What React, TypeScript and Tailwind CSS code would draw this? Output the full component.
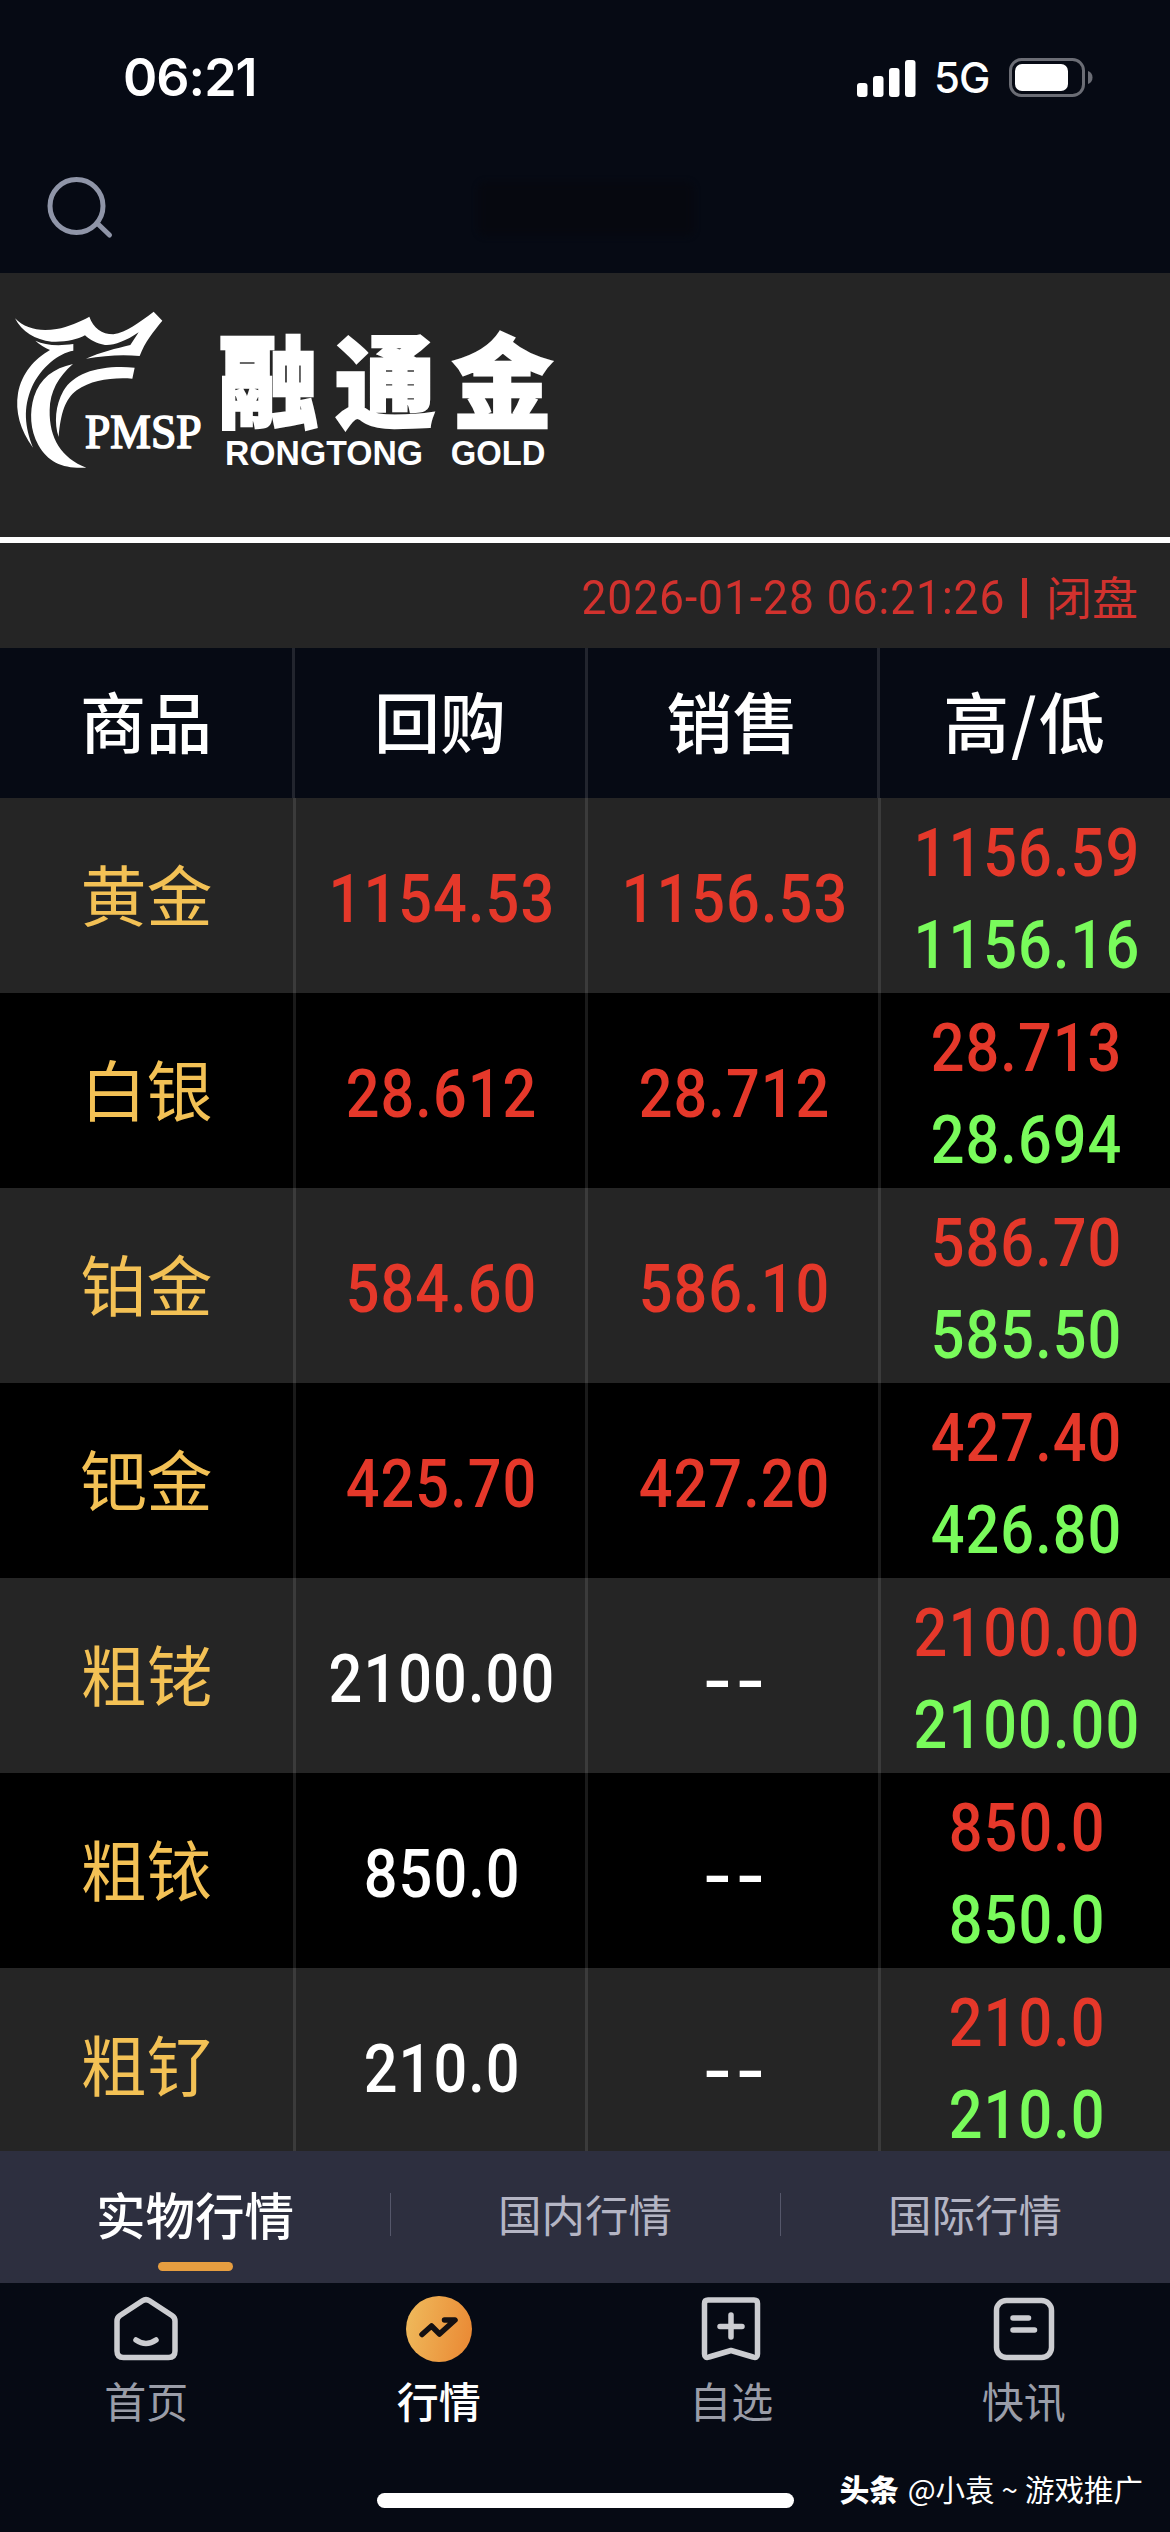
import { useState } from 'react';
import clsx from 'clsx';

type Quote = { name: string; buy: string; sell: string; high: string; low: string; up?: boolean };

const QUOTES: Quote[] = [
  { name: '黄金', buy: '1154.53', sell: '1156.53', high: '1156.59', low: '1156.16', up: true },
  { name: '白银', buy: '28.612', sell: '28.712', high: '28.713', low: '28.694', up: true },
  { name: '铂金', buy: '584.60', sell: '586.10', high: '586.70', low: '585.50', up: true },
  { name: '钯金', buy: '425.70', sell: '427.20', high: '427.40', low: '426.80', up: true },
  { name: '粗铑', buy: '2100.00', sell: '--', high: '2100.00', low: '2100.00' },
  { name: '粗铱', buy: '850.0', sell: '--', high: '850.0', low: '850.0' },
  { name: '粗钌', buy: '210.0', sell: '--', high: '210.0', low: '210.0' },
];

const COLUMNS = ['商品', '回购', '销售', '高/低'];
const TABS = ['实物行情', '国内行情', '国际行情'];

function StatusBar() {
  return (
    <div className="flex h-[156px] items-center justify-between pl-[123px] pr-[77px] font-['Inter',sans-serif] text-white">
      <span className="text-[52px] font-semibold leading-none tracking-[-1px]">06:21</span>
      <div className="flex items-center">
        <svg width="60" height="40" viewBox="0 0 60 40" fill="#fff">
          <rect x="1" y="25" width="10.5" height="14" rx="3" />
          <rect x="17" y="18" width="10.5" height="21" rx="3" />
          <rect x="33" y="10" width="10.5" height="29" rx="3" />
          <rect x="49" y="2" width="10.5" height="37" rx="3" />
        </svg>
        <span className="ml-[18px] w-[56px] text-[42px] font-medium leading-none tracking-[-1px]">5G</span>
        <svg className="ml-[19px]" width="84" height="40" viewBox="0 0 84 40">
          <rect x="1.5" y="1.5" width="73" height="36" rx="11" fill="none" stroke="#6b6d75" strokeWidth="3" />
          <rect x="6" y="6" width="53" height="27" rx="7" fill="#fff" />
          <path d="M79 13c3 1 4.500 3.500 4.500 6.500s-1.500 5.500-4.500 6.500z" fill="#6b6d75" />
        </svg>
      </div>
    </div>
  );
}

function SearchBar() {
  return (
    <div className="flex h-[117px] items-center pl-[46px]">
      <svg className="mb-3" width="70" height="66" viewBox="0 0 70 66" fill="none" stroke="#8f95a8" strokeWidth="5" strokeLinecap="round">
        <circle cx="30.500" cy="30" r="26.500" />
        <path d="M52 48l11.500 11" />
      </svg>
      <div className="mb-3 ml-[362px] h-[54px] w-[216px] rounded-lg bg-[#07080f] opacity-80 blur-[3px]" />
    </div>
  );
}

function Logo() {
  return (
    <div className="h-[264px] bg-[#252525] pl-[10px] pt-8">
      <svg className="overflow-visible" width="560" height="170" viewBox="0 0 1680 510" fill="#fff">
        <path d="M15 40C45 72 90 80 140 72C175 66 210 50 238 35C250 68 275 88 310 88C350 80 385 55 431 20L457 47C430 80 405 110 389 153C340 148 285 151 228 161C270 142 320 130 361 120L386 82C345 110 310 122 285 120C260 116 240 105 225 91C200 104 165 112 125 110C75 105 35 80 15 40Z" />
        <path d="M76 107C105 120 140 124 190 117V137C145 145 95 185 66 245C38 310 45 365 69 428C30 375 15 320 24 265C35 205 75 160 120 135C105 128 88 118 76 107Z" />
        <path d="M189 177C145 215 120 260 119 315C117 400 155 460 229 488C165 492 115 475 85 420C60 375 58 320 72 275C90 220 130 190 189 177Z" />
        <path d="M374 188L367 221C305 217 245 225 200 256C165 283 152 325 146 396C132 355 136 300 160 258C195 200 275 180 374 188Z" />
        <text x="225" y="430" fontSize="144" fontFamily="'Liberation Serif', serif" stroke="#fff" strokeWidth="5" textLength="350" lengthAdjust="spacingAndGlyphs">PMSP</text>
        <g fontSize="302" fontWeight="900" fontFamily="'Noto Sans CJK SC', sans-serif" stroke="#fff" strokeWidth="7">
          <text x="625" y="344">融</text>
          <text x="975" y="344">通</text>
          <text x="1326" y="344">金</text>
        </g>
        <g fontSize="103" fontWeight="700" fontFamily="'Liberation Sans', sans-serif">
          <text x="645" y="479" textLength="594" lengthAdjust="spacingAndGlyphs">RONGTONG</text>
          <text x="1322" y="479" textLength="284" lengthAdjust="spacingAndGlyphs">GOLD</text>
        </g>
      </svg>
    </div>
  );
}

function Num({ value, className }: { value: string; className: string }) {
  if (value === '--') {
    return <span className={clsx('ml-[7px] inline-block scale-x-[1.25] pt-1 font-medium tracking-[4px]', className)}>--</span>;
  }
  return <span className={clsx('ml-[3px] inline-block scale-x-[0.9] font-medium tracking-[1.2px]', className)}>{value}</span>;
}

function QuoteRow({ quote, odd }: { quote: Quote; odd: boolean }) {
  const color = quote.up ? 'text-[#e5382a]' : 'text-white';
  const cell = 'flex items-center justify-center';
  return (
    <div
      className={clsx(
        'grid h-[195px] shrink-0 grid-cols-[296px_292px_293px_289px] font-[Roboto,"Noto_Sans_CJK_SC",sans-serif] text-[66px] leading-none',
        odd ? 'bg-black' : 'bg-[#252525]',
      )}
    >
      <div className={clsx(cell, 'border-r-[3px] border-white/10 pt-1.5 text-[#f3c155]')}>{quote.name}</div>
      <div className={clsx(cell, 'border-r-[3px] border-white/10 pt-2')}><Num value={quote.buy} className={color} /></div>
      <div className={clsx(cell, 'border-r-[3px] border-white/10 pt-2')}><Num value={quote.sell} className={color} /></div>
      <div className="flex flex-col items-center justify-center gap-[26px] pt-[9px]">
        <Num value={quote.high} className="text-[#e5382a]" />
        <Num value={quote.low} className="text-[#79fb5b]" />
      </div>
    </div>
  );
}

function HomeIcon() {
  return (
    <svg width="66" height="66" viewBox="0 0 66 66" fill="none" stroke="#cccdd1" strokeWidth="5.500" strokeLinecap="round" strokeLinejoin="round">
      <path d="M29.500 4.800L7 19.500Q4 21.500 4 25V55Q4 61.500 10.500 61.500H55.500Q62 61.500 62 55V25Q62 21.500 59 19.500L36.500 4.800Q33 2.500 29.500 4.800Z" />
      <path d="M23 44Q33 51 43 44" />
    </svg>
  );
}

function TrendIcon() {
  return (
    <svg width="66" height="66" viewBox="0 0 66 66" fill="none">
      <defs>
        <linearGradient id="gold" x1="0" y1="0.400" x2="1" y2="0.600">
          <stop offset="0" stopColor="#efb85a" />
          <stop offset="1" stopColor="#ea8a35" />
        </linearGradient>
      </defs>
      <circle cx="33" cy="33" r="33" fill="url(#gold)" />
      <path d="M16 38.500L25.500 30L33.500 38L49 24H38.500" stroke="#141012" strokeWidth="5.500" strokeLinecap="round" strokeLinejoin="round" />
    </svg>
  );
}

function BookmarkIcon() {
  return (
    <svg width="66" height="66" viewBox="0 0 66 66" fill="none" stroke="#cccdd1" strokeWidth="5.500" strokeLinecap="round" strokeLinejoin="round">
      <path d="M10 4H56Q59.500 4 59.500 7.500V58Q59.500 62.500 55 61L33 54.500L11 61Q6.500 62.500 6.500 58V7.500Q6.500 4 10 4Z" />
      <path d="M33 19V41M22 30.500H44" />
    </svg>
  );
}

function NewsIcon() {
  return (
    <svg width="66" height="66" viewBox="0 0 66 66" fill="none" stroke="#cccdd1" strokeWidth="5.500" strokeLinecap="round">
      <rect x="5.500" y="4.500" width="55" height="57" rx="10" />
      <path d="M22 22H37.500M22 34H43.500" />
    </svg>
  );
}

const NAV = [
  { label: '首页', icon: HomeIcon },
  { label: '行情', icon: TrendIcon },
  { label: '自选', icon: BookmarkIcon },
  { label: '快讯', icon: NewsIcon },
];

export default function App() {
  const [tab, setTab] = useState(0);

  return (
    <div className="relative flex h-[2532px] w-[1170px] flex-col overflow-hidden bg-[#060a14] font-['Noto_Sans_CJK_SC',sans-serif]">
      <StatusBar />
      <SearchBar />
      <Logo />
      <div className="h-[6px] bg-white" />

      <div className="flex h-[105px] items-center justify-end bg-[#252525] pr-[32px] text-[#d1322e]">
        <span className="inline-block origin-right scale-x-[0.925] whitespace-pre pt-[5px] font-[Roboto] text-[48px] leading-none tracking-[1px]">2026-01-28 06:21:26</span>
        <span className="ml-[17px] mr-[19px] mt-1 h-[40px] w-[5px] bg-[#d1322e]" />
        <span className="pb-0.5 text-[46px] leading-none">闭盘</span>
      </div>

      {/* Table head */}
      <div className="grid h-[150px] grid-cols-[295px_293px_292px_290px] text-[66px] font-medium leading-none text-white">
        {COLUMNS.map((c, i) => (
          <div key={c} className={clsx('flex items-center justify-center pb-[9px]', i < 3 ? 'border-r-[3px] border-[#22252e]' : 'tracking-[2px]')}>{c}</div>
        ))}
      </div>

      <div className="flex h-[1353px] flex-col overflow-hidden">
        {QUOTES.map((q, i) => <QuoteRow key={q.name} quote={q} odd={i % 2 === 1} />)}
      </div>

      {/* Market tabs */}
      <div className="grid h-[132px] grid-cols-3 bg-[#2d2f3f]">
        {TABS.map((t, i) => (
          <button key={t} onClick={() => setTab(i)} className="relative flex items-center justify-center pb-[7px] leading-none">
            <span className={tab === i ? 'text-[49.500px] font-medium text-white' : 'text-[43.500px] text-[#b4b5c4]'}>{t}</span>
            {tab === i && <span className="absolute bottom-3 h-[9px] w-[75px] rounded-full bg-[#e79e40]" />}
            {i > 0 && <span className="absolute left-0 top-[42px] h-[43px] w-px bg-[#55576a]" />}
          </button>
        ))}
      </div>

      {/* Bottom navigation */}
      <nav className="grid grid-cols-4 pt-[13px]">
        {NAV.map(({ label, icon: Icon }, i) => (
          <div key={label} className="flex flex-col items-center gap-[17px]">
            <Icon />
            <span className={clsx('text-[42px] leading-none', i === 1 ? 'font-medium text-white' : 'text-[#9a9da8]')}>{label}</span>
          </div>
        ))}
      </nav>

      <div className="absolute bottom-6 left-[377px] h-[15px] w-[417px] rounded-full bg-white" />
      <div className="absolute bottom-[29px] right-[27px] flex items-center text-[29.500px] leading-none text-white">
        <b className="mr-[9px] font-black">头条</b>
        <span>@小袁</span>
        <span className="mx-[7px]">~</span>
        <span>游戏推广</span>
      </div>
    </div>
  );
}
